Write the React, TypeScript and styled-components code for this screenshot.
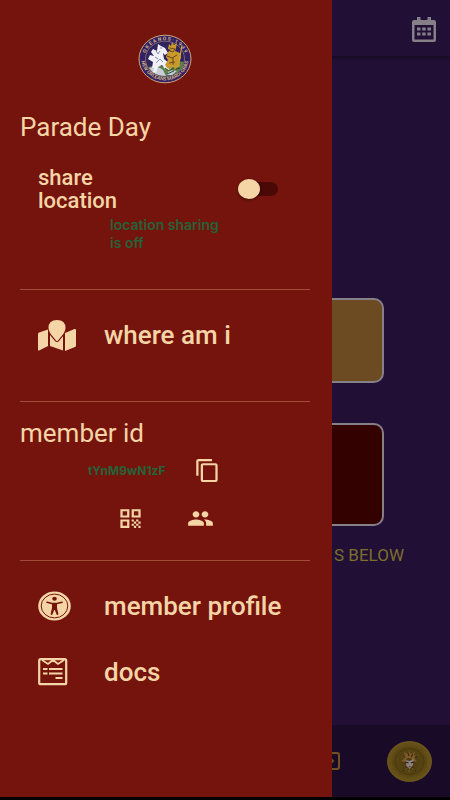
import React, { useState } from "react";
import styled, { createGlobalStyle } from "styled-components";
import { MdContentCopy, MdQrCode, MdPeople } from "react-icons/md";

const cream = "#f5d5a6";
const wine = "#75140d";
const green = "#256238";

const GlobalStyle = createGlobalStyle`
  * { box-sizing: border-box; }
  body { margin: 0; background: #000; font-family: Roboto, sans-serif; }
  button { border: 0; padding: 0; background: none; font: inherit; color: inherit; cursor: pointer; }
  svg { display: block; }
`;

const Page = styled.div`
  min-height: 100vh;
  display: flex;
  flex-direction: column;
  background: #210f36;
  border-bottom: 3px solid #000;
`;

const TopBar = styled.header`
  height: 56px;
  padding: 2px 14px 0;
  display: flex;
  align-items: center;
  justify-content: flex-end;
  box-shadow: 0 2px 4px rgba(0, 0, 0, 0.4);
`;

const Content = styled.main`
  flex: 1;
  display: flex;
  flex-direction: column;
  padding: 242px 46px 0;
`;

const Card = styled.section<{ $tone: string; $height: number }>`
  height: ${(p) => p.$height}px;
  margin: 0 20px 40px;
  border: 2px solid #858087;
  border-radius: 10px;
  background: ${(p) => p.$tone};
`;

const Hint = styled.p`
  margin: -21px 0 0;
  text-align: right;
  font-size: 17px;
  line-height: 20px;
  color: #7c702c;
`;

const BottomBar = styled.footer`
  height: 72px;
  padding: 0 18px;
  display: flex;
  align-items: center;
  justify-content: flex-end;
  gap: 47px;
  background: #190b28;
`;

const Drawer = styled.aside`
  position: fixed;
  top: 0;
  bottom: 3px;
  left: 0;
  width: 332px;
  max-width: 85vw;
  padding: 34px 22px 0 20px;
  background: ${wine};
  color: ${cream};
  overflow-y: auto;
`;

const Brand = styled.div`
  display: flex;
  justify-content: center;
`;

const Heading = styled.h2`
  margin: 0;
  font-size: 26px;
  line-height: 30px;
  font-weight: 400;
`;

const Section = styled.section<{ $height: number; $top: number }>`
  min-height: ${(p) => p.$height}px;
  padding-top: ${(p) => p.$top}px;
  border-bottom: 1px solid #a04e3a;
`;

const LastSection = styled.nav`
  padding-top: 27px;
`;

const ShareRow = styled.label`
  display: flex;
  align-items: center;
  justify-content: space-between;
  margin: 24px 32px 0 18px;
  cursor: pointer;
`;

const ShareText = styled.span`
  width: 100px;
  font-size: 22px;
  line-height: 23px;
  font-weight: 500;
`;

const Toggle = styled.input`
  appearance: none;
  margin: 0;
  width: 40px;
  height: 14px;
  display: flex;
  align-items: center;
  background: #4b0906;
  border-radius: 7px;
  cursor: pointer;
  &::before {
    content: "";
    width: 22px;
    height: 20px;
    border-radius: 50%;
    background: ${cream};
    box-shadow: 0 1px 3px rgba(0, 0, 0, 0.5);
  }
  &:checked { justify-content: flex-end; }
`;

const Status = styled.p`
  width: 120px;
  margin: 4px 0 0 90px;
  font: 600 14px/18px Inter, sans-serif;
  color: ${green};
`;

const MenuItem = styled.button`
  && {
    display: grid;
    grid-template-columns: 66px 1fr;
    align-items: center;
    width: 100%;
    min-height: 36px;
    padding-left: 18px;
    text-align: left;
    font-size: 26px;
    line-height: 36px;
    font-weight: 500;
  }
  & + & { margin-top: 30px; }
`;

const Glyph = styled.span`
  display: block;
  svg { width: 27px; height: 25px; }
`;

const IdRow = styled.div`
  display: grid;
  grid-template-columns: 106px 27px;
  align-items: center;
  margin: 10px 0 0 68px;
`;

const MemberCode = styled.span`
  font: 700 12px/18px Inter, sans-serif;
  color: ${green};
`;

const Actions = styled.div`
  display: flex;
  gap: 43px;
  align-items: center;
  margin: 23px 0 0 97px;
`;

const SealText = styled.text`
  font: 700 5px Roboto, sans-serif;
  fill: #c9ae80;
  text-anchor: middle;
`;

function Seal() {
  return (
    <svg width="54" height="50" viewBox="0 0 54 50" role="img" aria-label="Krewe seal">
      <defs>
        <path id="upper" d="M6.500 25A20.500 18.800 0 0 1 47.500 25" />
        <path id="lower" d="M3 23A24 23.500 0 0 0 51 23" />
      </defs>
      <ellipse cx="27" cy="25" rx="26" ry="23.800" fill="#332066" stroke="#c9a877" />
      <ellipse cx="27" cy="25" rx="19.500" ry="17.800" fill="#30245f" stroke="#a8946f" strokeWidth=".6" />
      <path d="M10 33q9-3 17 0 8-8 19-5-2 10-12 13-7 2-14 0-6-3-10-8" fill="#5b8148" />
      <path d="M11 34q9-3 14 2l3 6q-12 0-17-8M31 36l8 1-5 4h-5" fill="#c9cdd9" />
      <path d="m14 34 1-6-5-3 2-4 4 1-3-4 2-3 4 2 1-7 3 2 4 2 3 5-3 2-2-2 1 6 6 5-1 6-4-1-3-4-4 2-2 6-3-1 1-4Z" fill="#f0f0f7" />
      <path d="m18 17 2 3 2-3m-5 6 3 2m-2 4 4-4 3 3m-3-14h2" fill="none" stroke="#6f74a3" strokeWidth=".8" />
      <path d="m30 15 1-5 2 2 1-4 2 3 3-2-1 5-1 3 5 2 1 5-2 3 1 5-5 3-3-3-4 3-3-4 3-5-2-3 2-5 3-2Z" fill="#c9992b" />
      <path d="m32 14 5 1-2 3-3-1m-3 5 5 2 5-3m-8 8 6-1m-2-5v8" fill="none" stroke="#6b4a21" />
      <path d="M44 11 41 29M30 38l5-7" fill="none" stroke="#d8b145" />
      <path d="m27 34 4 3 5-3m-7 6 7-3m2-2 4-1" fill="none" stroke="#254e34" />
      <SealText><textPath href="#upper" startOffset="50%">O K E A N O S · 1 9 4 9</textPath></SealText>
      <SealText><textPath href="#lower" startOffset="50%">NEW ORLEANS MARDI GRAS</textPath></SealText>
    </svg>
  );
}

function MapIcon() {
  return (
    <svg width="38" height="31" viewBox="0 0 38 31" fill={cream} aria-hidden="true">
      <path d="M0 14q0-1 1-1.500L10 9.500V26L1 30.500Q0 31 0 29.500ZM12 15l5 6q2 2 4 0l4-5v14.500L12 26ZM27 13l9.500-4q1.500-.5 1.500 1v15.500q0 1-1 1.500L27 31Z" />
      <path d="M19 0q8.500 0 8.500 8 0 4-5.500 10l-2 2.500q-1 1-2 0L16 18Q10.500 12 10.500 8q0-8 8.500-8Z" stroke={wine} strokeWidth="1.500" paintOrder="stroke" />
    </svg>
  );
}

function ProfileIcon() {
  return (
    <svg width="33" height="30" viewBox="0 0 33 30" aria-hidden="true">
      <ellipse cx="16.500" cy="15" rx="16.300" ry="14.600" fill={cream} />
      <ellipse cx="16.500" cy="15" rx="13.300" ry="11.900" fill="none" stroke={wine} strokeWidth="1" />
      <ellipse cx="16.500" cy="7.800" rx="2.300" ry="2" fill={wine} />
      <path d="m9 11.200 5 1.300h5l5-1.300" fill="none" stroke={wine} strokeWidth="1.600" strokeLinecap="round" />
      <path d="M14 12h5v5l1.500 6.300q-1.400 1.200-2 0L16.800 19h-.6l-1.700 4.300q-.6 1.200-2 0L14 17Z" fill={wine} />
    </svg>
  );
}

function DocsIcon() {
  return (
    <svg width="30" height="28" viewBox="0 0 30 28" fill="none" stroke={cream} aria-hidden="true">
      <rect x="1.200" y="1.200" width="27" height="25" rx="1.500" strokeWidth="2.200" />
      <path d="m4 2 6 4 5-4 5 4 6-4" strokeWidth="1.800" />
      <path d="M5 11h4.500M11 11h13.500M5 15.500h4.500M11 15.500h13.500M17.500 20h7" strokeWidth="2.200" />
    </svg>
  );
}

function CalendarIcon() {
  return (
    <svg width="24" height="25" viewBox="0 0 24 25" fill="#858087" aria-hidden="true">
      <path fillRule="evenodd" d="M5 0h3.500v3h7V0H19v3h3q2 0 2 2v18q0 2-2 2H2q-2 0-2-2V5q0-2 2-2h3ZM2.500 8v14.500h19V8Z" />
      <path d="M5 10.500h3.500v3H5Zm5.200 0h3.500v3h-3.500Zm5.200 0H19v3h-3.600ZM5 15.500h3.500v3H5Zm5.200 0h3.500v3h-3.500Zm5.200 0H19v3h-3.600Z" />
    </svg>
  );
}

function ExitIcon() {
  return (
    <svg width="20" height="20" viewBox="0 0 20 20" fill="none" stroke="#73501f" strokeWidth="2" aria-hidden="true">
      <path d="M3 2h14q2 0 2 2v12q0 2-2 2H3M4 10h9m-3-3 3 3-3 3" />
    </svg>
  );
}

function Coin() {
  return (
    <svg width="45" height="41" viewBox="0 0 45 41" aria-hidden="true">
      <defs>
        <radialGradient id="gold">
          <stop offset="0" stopColor="#4b3a10" />
          <stop offset=".7" stopColor="#584512" />
          <stop offset="1" stopColor="#6a541a" />
        </radialGradient>
      </defs>
      <ellipse cx="22.500" cy="20.500" rx="22" ry="20" fill="url(#gold)" stroke="#755d20" strokeWidth=".8" />
      <ellipse cx="22.500" cy="20.500" rx="18.500" ry="16.500" fill="none" stroke="#755f20" strokeWidth="1.300" strokeDasharray="1 1.300" opacity=".4" />
      <ellipse cx="22.500" cy="20.500" rx="14.500" ry="13" fill="none" stroke="#3c2d0b" strokeWidth=".5" />
      <path d="m15 14 3 1-1-4 4 2 1-3 2 3 4-2-1 4 4-1-3 4 2 3-5-1-1-3h-4l-2 4-4-1 3-2Z" fill="#7d5a28" />
      <path d="m16 14 2 3m3-5 1 3m4-2-2 3m4 1 2-2M16 30l4-4m9 4-4-4" fill="none" stroke="#372a12" strokeWidth="1.200" />
      <path d="m18.500 19 4 1 4-2-.5 6-3.500 4-3-3Z" fill="#8c8380" />
      <path d="m18.500 21 3 1m2.500 0 2.500-1" stroke="#24170e" strokeWidth="1.200" />
      <path d="m21.500 26 2-.5" stroke="#6d211b" />
      <path d="m17 29 3-2m5 0 3 2m-6 0v2" stroke="#85702e" strokeWidth=".7" />
    </svg>
  );
}

export default function App() {
  const [sharing, setSharing] = useState(false);
  return (
    <>
      <GlobalStyle />
      <Page>
        <TopBar>
          <button aria-label="Calendar"><CalendarIcon /></button>
        </TopBar>
        <Content>
          <Card $tone="#6c4b22" $height={85} />
          <Card $tone="#330200" $height={103} />
          <Hint>S BELOW</Hint>
        </Content>
        <BottomBar>
          <button aria-label="Exit"><ExitIcon /></button>
          <button aria-label="Doubloon"><Coin /></button>
        </BottomBar>
      </Page>
      <Drawer>
        <Brand><Seal /></Brand>
        <Section $height={206} $top={28}>
          <Heading>Parade Day</Heading>
          <ShareRow>
            <ShareText>share location</ShareText>
            <Toggle type="checkbox" role="switch" checked={sharing} onChange={(e) => setSharing(e.target.checked)} />
          </ShareRow>
          <Status>{`location sharing is ${sharing ? "on" : "off"}`}</Status>
        </Section>
        <Section $height={112} $top={27}>
          <MenuItem><MapIcon />where am i</MenuItem>
        </Section>
        <Section $height={159} $top={16}>
          <Heading>member id</Heading>
          <IdRow>
            <MemberCode>tYnM9wN1zF</MemberCode>
            <button aria-label="Copy"><Glyph><MdContentCopy preserveAspectRatio="none" /></Glyph></button>
          </IdRow>
          <Actions>
            <button aria-label="QR code"><Glyph><MdQrCode preserveAspectRatio="none" /></Glyph></button>
            <button aria-label="Members"><Glyph><MdPeople preserveAspectRatio="none" /></Glyph></button>
          </Actions>
        </Section>
        <LastSection>
          <MenuItem><ProfileIcon />member profile</MenuItem>
          <MenuItem><DocsIcon />docs</MenuItem>
        </LastSection>
      </Drawer>
    </>
  );
}
